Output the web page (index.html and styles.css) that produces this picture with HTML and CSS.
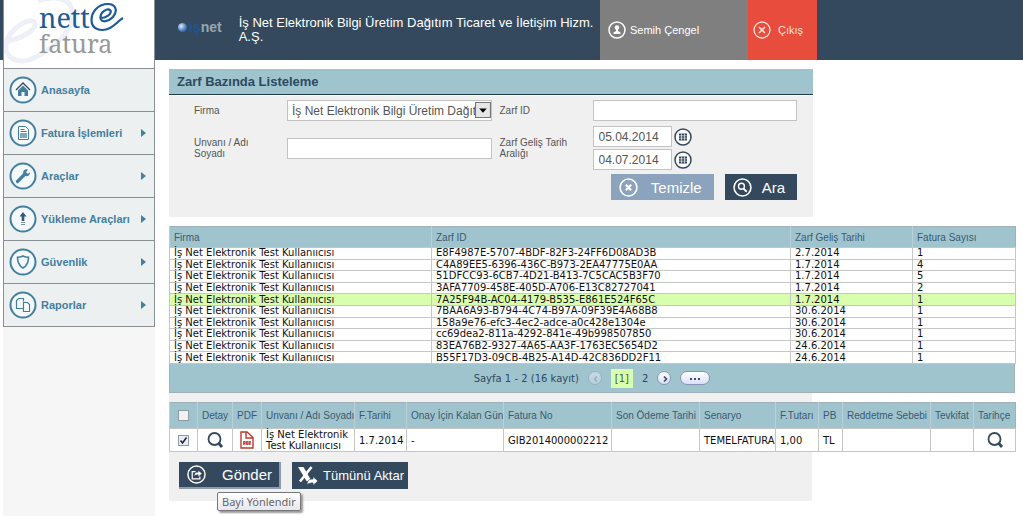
FILE: index.html
```html
<!DOCTYPE html>
<html lang="tr">
<head>
<meta charset="utf-8">
<title>Zarf Bazında Listeleme</title>
<link rel="stylesheet" href="styles.css">
</head>
<body>
<svg class="defs" aria-hidden="true">
  <symbol id="ring" viewBox="0 0 28 28"><circle cx="14" cy="14" r="12.5" fill="#f4f8fa" stroke="#437f9f" stroke-width="2"/></symbol>
  <symbol id="cal" viewBox="0 0 18 18"><circle cx="9" cy="9" r="8" fill="#fff" stroke="#34495e" stroke-width="1.5"/><path d="M5 5.5h8v7H5z" fill="#34495e"/><path d="M7.5 5.5v7M10.5 5.5v7M5 7.8h8M5 10.2h8" stroke="#fff" stroke-width=".6"/></symbol>
  <symbol id="lens" viewBox="0 0 18 18"><circle cx="8.500" cy="8" r="6" fill="none" stroke="#34495e" stroke-width="1.800"/><path d="M12.500 12l3.500 4" stroke="#34495e" stroke-width="2.800"/></symbol>
</svg>
<div class="page">
  <aside class="sidebar">
    <div class="logo">
      <svg class="swirl" viewBox="0 0 80 68" aria-hidden="true"><path d="M2 42C18 38 32 30 31 24C29 16 12 24 4 38C-4 56 12 66 30 58C56 46 76 22 66 5C60 -4 44 -3 34 1" fill="none" stroke="#edf1f7" stroke-width="5"/></svg>
      <div class="brand">
        <div class="brand-top">nett<svg viewBox="0 0 34 30" aria-hidden="true"><path d="M10.500 16C16 16 22 12 20.500 8.500C17.500 5.500 10 10 10.500 16C11 21 18 20 23 15C28 9 26 2 18 2C8 2 1.500 10 1.500 18C1.500 28 12 30 20 26C27 22 29 18 33 16" fill="none" stroke="#1d5a98" stroke-width="2.2"/></svg></div>
        <div class="brand-bottom">fatura</div>
      </div>
    </div>
    <nav class="menu">
      <a href="#"><svg viewBox="0 0 28 28"><use href="#ring"/><path d="M7 14l7-7 7 7" fill="none" stroke="#34495e" stroke-width="1.3"/><path d="M9 14.5l5-5 5 5V20h-3.500v-4h-3v4H9z" fill="#437f9f"/></svg><span>Anasayfa</span></a>
      <a href="#" class="sub"><svg viewBox="0 0 28 28"><use href="#ring"/><path d="M9.500 7.500h7l3 3v10h-10z" fill="#fff" stroke="#437f9f"/><path d="M11.500 10.500h4M11.500 12.500h6" stroke="#437f9f"/><path d="M11 14h7v5h-7z" fill="#7fa9c0"/></svg><span>Fatura İşlemleri</span></a>
      <a href="#" class="sub"><svg viewBox="0 0 28 28"><use href="#ring"/><path d="M8.500 19.500l7-7" stroke="#437f9f" stroke-width="3.200" stroke-linecap="round"/><path d="M19 7.500a3.500 3.500 0 1 0 2 3l-2.500 1.300-1.500-1.500z" fill="#437f9f"/></svg><span>Araçlar</span></a>
      <a href="#" class="sub"><svg viewBox="0 0 28 28"><use href="#ring"/><path d="M14 7l3.500 4.500H15.300V16h-2.600v-4.500h-2.200z" fill="#34587a"/><path d="M12 17.500h4M12 19.500h4" stroke="#7f93a3"/></svg><span>Yükleme Araçları</span></a>
      <a href="#" class="sub"><svg viewBox="0 0 28 28"><use href="#ring"/><path d="M14 8c2 1 3.500 1.300 5.500 1.300 0 5-1 8.200-5.500 10.700-4.500-2.500-5.500-5.700-5.500-10.700C10.500 9.300 12 9 14 8z" fill="none" stroke="#437f9f" stroke-width="1.600"/></svg><span>Güvenlik</span></a>
      <a href="#" class="sub"><svg viewBox="0 0 28 28"><use href="#ring"/><path d="M14 17.500H7.500v-8L9.500 7.500h5v3" fill="none" stroke="#437f9f" stroke-width="1.200"/><path d="M14.500 11.500h4l2 2v7h-6z" fill="#fff" stroke="#437f9f" stroke-width="1.200"/></svg><span>Raporlar</span></a>
    </nav>
  </aside>
  <div class="content">
    <header class="topbar">
      <div class="company">
        <div class="isnet"><i class="ball"></i><b class="is">iş</b><b>net</b></div>
        <div class="company-name">İş Net Elektronik Bilgi Üretim Dağıtım Ticaret ve İletişim Hizm. A.Ş.</div>
      </div>
      <div class="user"><svg viewBox="0 0 18 18"><circle cx="9" cy="9" r="8" fill="none" stroke="#fff" stroke-width="1.500"/><circle cx="9" cy="6.500" r="2.300" fill="#fff"/><path d="M8 8h2v2l2.500 1.500V13h-7v-1.500L8 10z" fill="#fff"/></svg>Semih Çengel</div>
      <a href="#" class="exit"><svg viewBox="0 0 18 18"><circle cx="9" cy="9" r="8" fill="none" stroke="#ffe0dc" stroke-width="1.300"/><path d="M6 6l6 6M12 6l-6 6" stroke="#ffe0dc" stroke-width="1.600"/></svg>Çıkış</a>
    </header>
    <main class="main">
      <section class="panel">
        <h1>Zarf Bazında Listeleme</h1>
        <form class="filters">
          <div class="col">
            <div class="field"><label for="firma">Firma</label>
              <div class="select"><select id="firma"><option>İş Net Elektronik Bilgi Üretim Dağıtım Ticaret ve İletişim Hizm. A.Ş.</option></select><svg viewBox="0 0 15 15" aria-hidden="true"><path d="M.5.5h14v14H.5z" fill="#e6e6e6" stroke="#777"/><path d="M4 6h7l-3.500 4z" fill="#000"/></svg></div></div>
            <div class="field second"><label for="unvan">Unvanı / Adı Soyadı</label><input id="unvan" type="text"></div>
          </div>
          <div class="col">
            <div class="field"><label for="zarf">Zarf ID</label><input id="zarf" type="text"></div>
            <div class="field dates"><label for="d1">Zarf Geliş Tarih Aralığı</label>
              <div class="date-list">
                <div class="date"><input id="d1" type="text" value="05.04.2014"><button type="button" aria-label="Başlangıç tarihi"><svg><use href="#cal"/></svg></button></div>
                <div class="date"><input type="text" value="04.07.2014" aria-label="Bitiş tarihi"><button type="button" aria-label="Bitiş tarihi seç"><svg><use href="#cal"/></svg></button></div>
              </div></div>
            <div class="actions">
              <button type="reset" class="btn light"><svg viewBox="0 0 18 18"><circle cx="9" cy="9" r="8" fill="none" stroke="#fff" stroke-width="1.500"/><path d="M6.500 6.500l5 5M11.500 6.500l-5 5" stroke="#fff" stroke-width="2"/></svg><span>Temizle</span></button>
              <button type="button" class="btn"><svg viewBox="0 0 18 18"><circle cx="9" cy="9" r="8" fill="none" stroke="#fff" stroke-width="1.500"/><circle cx="8" cy="7.800" r="2.800" fill="none" stroke="#fff" stroke-width="1.300"/><path d="M10 10l3 3" stroke="#fff" stroke-width="1.800"/></svg><span>Ara</span></button>
            </div>
          </div>
        </form>
      </section>

      <section class="envelopes">
        <table class="grid list">
          <colgroup><col class="w262"><col class="w359"><col class="w122"><col class="w103"></colgroup>
          <thead><tr><th>Firma</th><th>Zarf ID</th><th>Zarf Geliş Tarihi</th><th>Fatura Sayısı</th></tr></thead>
          <tbody>
            <tr><td>İş Net Elektronik Test Kullanııcısı</td><td>E8F4987E-5707-4BDF-82F3-24FF6D08AD3B</td><td>2.7.2014</td><td>1</td></tr>
            <tr><td>İş Net Elektronik Test Kullanııcısı</td><td>C4A89EE5-6396-436C-B973-2EA47775E0AA</td><td>1.7.2014</td><td>4</td></tr>
            <tr><td>İş Net Elektronik Test Kullanııcısı</td><td>51DFCC93-6CB7-4D21-B413-7C5CAC5B3F70</td><td>1.7.2014</td><td>5</td></tr>
            <tr><td>İş Net Elektronik Test Kullanııcısı</td><td>3AFA7709-458E-405D-A706-E13C82727041</td><td>1.7.2014</td><td>2</td></tr>
            <tr class="selected"><td>İş Net Elektronik Test Kullanııcısı</td><td>7A25F94B-AC04-4179-B535-E861E524F65C</td><td>1.7.2014</td><td>1</td></tr>
            <tr><td>İş Net Elektronik Test Kullanııcısı</td><td>7BAA6A93-B794-4C74-B97A-09F39E4A68B8</td><td>30.6.2014</td><td>1</td></tr>
            <tr><td>İş Net Elektronik Test Kullanııcısı</td><td>158a9e76-efc3-4ec2-adce-a0c428e1304e</td><td>30.6.2014</td><td>1</td></tr>
            <tr><td>İş Net Elektronik Test Kullanııcısı</td><td>cc69dea2-811a-4292-841e-49b998507850</td><td>30.6.2014</td><td>1</td></tr>
            <tr><td>İş Net Elektronik Test Kullanııcısı</td><td>83EA76B2-9327-4A65-AA3F-1763EC5654D2</td><td>24.6.2014</td><td>1</td></tr>
            <tr><td>İş Net Elektronik Test Kullanııcısı</td><td>B55F17D3-09CB-4B25-A14D-42C836DD2F11</td><td>24.6.2014</td><td>1</td></tr>
          </tbody>
        </table>
        <div class="pager">
          <span class="count">Sayfa 1 - 2 (16 kayıt)</span>
          <button type="button" class="round off" disabled aria-label="Önceki"><svg viewBox="0 0 14 14"><path d="M8 4.500L5.500 7 8 9.500" fill="none" stroke="#7d97aa" stroke-width="1.500"/></svg></button>
          <span class="current">[1]</span>
          <a href="#">2</a>
          <button type="button" class="round" aria-label="Sonraki"><svg viewBox="0 0 14 14"><path d="M6 4.500L8.500 7 6 9.500" fill="none" stroke="#3c4a78" stroke-width="1.700"/></svg></button>
          <button type="button" class="round wide" aria-label="Diğer"><svg viewBox="0 0 14 14"><path d="M2 7h2M6 7h2M10 7h2" stroke="#3c4a78" stroke-width="2"/></svg></button>
        </div>
      </section>

      <section class="invoices">
        <table class="grid detail">
          <colgroup><col class="w28"><col class="w35"><col class="w29"><col class="w93"><col class="w52"><col class="w97"><col class="w108"><col class="w88"><col class="w76"><col class="w43"><col class="w24"><col class="w88"><col class="w43"><col class="w42"></colgroup>
          <thead><tr><th class="mid"><input type="checkbox" aria-label="Tümünü seç"></th><th>Detay</th><th>PDF</th><th>Unvanı / Adı Soyadı</th><th>F.Tarihi</th><th>Onay İçin Kalan Gün</th><th>Fatura No</th><th>Son Ödeme Tarihi</th><th>Senaryo</th><th>F.Tutarı</th><th>PB</th><th>Reddetme Sebebi</th><th>Tevkifat</th><th>Tarihçe</th></tr></thead>
          <tbody><tr><td class="mid"><input type="checkbox" checked aria-label="Faturayı seç"></td>
            <td class="mid"><a href="#" aria-label="Detay"><svg><use href="#lens"/></svg></a></td>
            <td class="mid"><a href="#" aria-label="PDF"><svg viewBox="0 0 18 18"><path d="M3 1h6l6 5.500V17H3zM8 1v6h7" fill="#fff" stroke="#bd3b30" stroke-width="1.400"/><path d="M5 10h8v4H5z" fill="#e2a09a"/><path d="M5.500 14v-3.500h1.500v2H5.500M8.500 10.500v3h1.300v-3zM11.500 14v-3.500H13M11.500 12h1.300" fill="none" stroke="#b8372c" stroke-width=".8"/></svg></a></td>
            <td>İş Net Elektronik Test Kullanııcısı</td><td>1.7.2014</td><td>-</td><td>GIB2014000002212</td><td></td><td>TEMELFATURA</td><td>1,00</td><td>TL</td><td></td><td></td>
            <td class="mid"><a href="#" aria-label="Tarihçe"><svg><use href="#lens"/></svg></a></td></tr></tbody>
        </table>
        <div class="bulk">
          <div class="send">
            <button type="button" class="btn raised"><svg viewBox="0 0 20 20"><circle cx="10" cy="10" r="9" fill="none" stroke="#fff" stroke-width="1.500"/><path d="M9 7H5.500v7.500h8V12" fill="none" stroke="#fff" stroke-width="1.300"/><path d="M8 11.500C8 8.500 9.500 8 12 8V6l3.500 3-3.500 3v-2C10 10 9 10 8 11.500z" fill="#fff"/></svg><span>Gönder</span></button>
            <div class="tip" role="tooltip">Bayi Yönlendir</div>
          </div>
          <button type="button" class="btn export"><svg viewBox="0 0 20 20"><path d="M0 1h5.500l8 14H8.500z" fill="#fff"/><path d="M13.500 1L2 15.500" stroke="#fff" stroke-width="2.600"/><path d="M9 19c0-4.500 2-6 6-6v-2.500l5 4.500-5 4.500V17c-3 0-4.500.5-6 2z" fill="#fff" stroke="#34495e" stroke-width=".8"/></svg><span>Tümünü Aktar</span></button>
        </div>
      </section>
    </main>
  </div>
</div>
</body>
</html>
```
FILE: styles.css
```css
* { box-sizing: border-box; }
body { margin: 0; background: #fff; font-family: "Liberation Sans", Arial, sans-serif; font-size: 10px; color: #555; }
.defs { position: absolute; width: 0; height: 0; }
button, input, select { font: inherit; margin: 0; }
button { cursor: pointer; }
a { color: inherit; text-decoration: none; }
.page { display: flex; min-height: 100vh; background: linear-gradient(#34495e, #34495e) top / 100% 60px no-repeat, #fff; padding-left: 3px; }

/* sidebar */
.sidebar { flex: 0 0 152px; background: #f6f6f6; }
.logo { position: relative; height: 68px; overflow: hidden; background: #fff; border: solid #8a8f94; border-width: 0 1px; }
.swirl { position: absolute; left: 0; top: 0; width: 80px; height: 68px; }
.brand { position: relative; padding: 2px 0 0 35px; font-family: "Noto Serif", "Liberation Serif", serif; }
.brand-top { display: flex; color: #1d5a98; font-size: 27px; line-height: 32px; }
.brand-top svg { width: 34px; height: 30px; }
.brand-bottom { color: #999; font-size: 25px; line-height: 18px; }
.menu { border: 1px solid #8a8f94; border-bottom: 0; }
.menu a { display: flex; align-items: center; gap: 4px; height: 43px; padding: 0 8px 0 5px; background: #ecf0f1; border-bottom: 1px solid #8a8f94; color: #437f9f; font-size: 11px; font-weight: bold; }
.menu svg { width: 28px; height: 28px; }
.menu .sub::after { content: ""; margin-left: auto; border: solid transparent; border-width: 4px 0 4px 5px; border-left-color: #437f9f; }

/* top bar */
.content { flex: 1; min-width: 0; }
.topbar { display: flex; height: 60px; background: #34495e; color: #fff; }
.company { display: flex; flex: 0 1 445px; gap: 17px; padding: 16px 4px 0 23px; }
.isnet { display: flex; align-items: center; height: 22px; color: #9aa5ae; font-size: 14px; }
.isnet .is { color: #1d5590; }
.ball { width: 9px; height: 9px; margin-right: 2px; border-radius: 50%; background: radial-gradient(circle at 35% 35%, #dfeaf8, #3f78bb 60%, #1c4f8a); }
.company-name { font-size: 13px; line-height: 14px; }
.user, .exit { display: flex; align-items: center; font-size: 11px; }
.user { flex: 0 0 148px; gap: 4px; padding-left: 8px; background: #7f7f7f; }
.exit { flex: 0 0 69px; gap: 7px; padding-left: 5px; background: #e74c3c; color: #ffe0dc; }
.user svg, .exit svg { width: 18px; height: 18px; }

/* filter panel */
.main { padding: 9px 8px 15px 14px; }
.panel { width: 76%; min-width: 644px; background: #f0f0f0; }
.panel h1 { margin: 0; padding: 0 8px; background: #a0c4ce; border-bottom: 1px solid #1f3c50; box-shadow: 0 1px #fff; color: #2c4a60; font-size: 13px; line-height: 25px; }
.filters { display: grid; grid-template-columns: 1fr 1fr; gap: 8px; padding: 5px 16px 17px 25px; }
.field { display: grid; grid-template-columns: 93px 1fr; align-items: center; }
.field.second { margin-top: 16px; }
.field.dates { margin-top: 5px; }
.field label { padding-right: 20px; font-size: 10px; line-height: 11px; }
input[type=text], select { width: 100%; height: 21px; padding: 0 5px; border: 1px solid #c3c3c3; border-radius: 0; background: #fff; color: #555; font-size: 12px; }
.select { position: relative; }
.select select { appearance: none; padding: 0 16px 0 4px; }
.select svg { position: absolute; right: 1px; top: 2px; width: 16px; height: 16px; pointer-events: none; }
.date-list { display: grid; gap: 2px; }
.date { display: flex; gap: 2px; }
.date input[type=text] { width: 79px; }
.date button { padding: 0; border: 0; background: none; }
.date svg { display: block; width: 18px; height: 18px; }
.actions { display: flex; justify-content: flex-end; gap: 11px; margin-top: 4px; }
.btn { display: flex; align-items: center; gap: 10px; height: 26px; padding: 0 12px 0 8px; border: 0; background: #34495e; color: #fff; font-size: 15px; white-space: nowrap; }
.btn.light { gap: 13px; background: #8ba3bd; }
.btn svg { width: 19px; height: 19px; }

/* tables */
.envelopes { margin-top: 9px; }
.grid { width: 100%; table-layout: fixed; border-collapse: collapse; border: 1px solid #9fb0b8; }
.grid th { padding: 0 4px; background: #a0c4ce; border-left: 1px solid #b9d0d8; color: #3a5a70; font-size: 10px; font-weight: normal; text-align: left; white-space: nowrap; }
.grid td { padding: 0 4px; border: 1px solid #c6c6c6; background: #fff; color: #111; font-family: "DejaVu Sans", Verdana, sans-serif; font-size: 10px; }
.list { height: 138px; }
.list th { height: 21px; }
.list td { line-height: 10px; }
.grid .selected td { background: #d9ffae; }
.w262 { width: 262px; } .w359 { width: 359px; } .w122 { width: 122px; } .w103 { width: 103px; }
.w28 { width: 28px; } .w35 { width: 35px; } .w29 { width: 29px; } .w93 { width: 93px; } .w52 { width: 52px; } .w97 { width: 97px; } .w108 { width: 108px; }
.w88 { width: 88px; } .w76 { width: 76px; } .w43 { width: 43px; } .w24 { width: 24px; } .w42 { width: 42px; }
.pager { display: flex; align-items: center; justify-content: center; gap: 9px; height: 29px; background: #a0c4ce; border: 1px solid #9fb0b8; border-top: 0; color: #2c4a60; font-family: "DejaVu Sans", Verdana, sans-serif; }
.pager .current { padding: 0 4px; background: #d9ffae; line-height: 19px; color: #44643c; }
.round { display: grid; place-items: center; width: 14px; height: 14px; padding: 0; border: 1px solid #8796b8; border-radius: 8px; background: linear-gradient(#fff, #d9e0f2); }
.round.off { opacity: .4; }
.round.wide { width: 30px; }
.round svg { width: 14px; height: 14px; }

.invoices { padding-top: 9px; background: linear-gradient(#f0f0f0, #f0f0f0) left / 76% no-repeat; }
.detail th { height: 26px; }
.detail td { height: 22px; line-height: 11px; }
.grid .mid { padding: 0; text-align: center; }
.detail svg { display: block; width: 18px; height: 18px; margin: 0 auto; }
.grid input { display: block; appearance: none; width: 11px; height: 11px; margin: 0 auto; border: 1px solid #8f9aa2; background: #f1f1f1; }
.grid input:checked { background: #e8eef4 url("data:image/svg+xml,%3Csvg xmlns='http://www.w3.org/2000/svg' viewBox='0 0 9 9'%3E%3Cpath d='M1.5 4.500L3.500 7L7.500 1.500' fill='none' stroke='%23223' stroke-width='1.500'/%3E%3C/svg%3E") center / 9px 9px no-repeat; }
.bulk { display: flex; gap: 11px; padding: 10px 10px 12px; }
.send { position: relative; }
.bulk .btn { height: 27px; }
.bulk .raised { padding: 0 7px 0 8px; gap: 16px; border: solid #8f9ba8; border-width: 0 2px 2px 0; }
.bulk .export { padding: 0 4px 0 6px; gap: 5px; font-size: 13px; }
.bulk .export svg { width: 20px; height: 20px; }
.tip { position: absolute; left: 38px; top: 30px; padding: 0 4px; border: 1px solid #777; border-radius: 2px; background: linear-gradient(#fff, #e6e7f0); box-shadow: 2px 2px 2px #999; color: #666; font-family: "Noto Sans", sans-serif; font-size: 11px; line-height: 17px; white-space: nowrap; }
```
